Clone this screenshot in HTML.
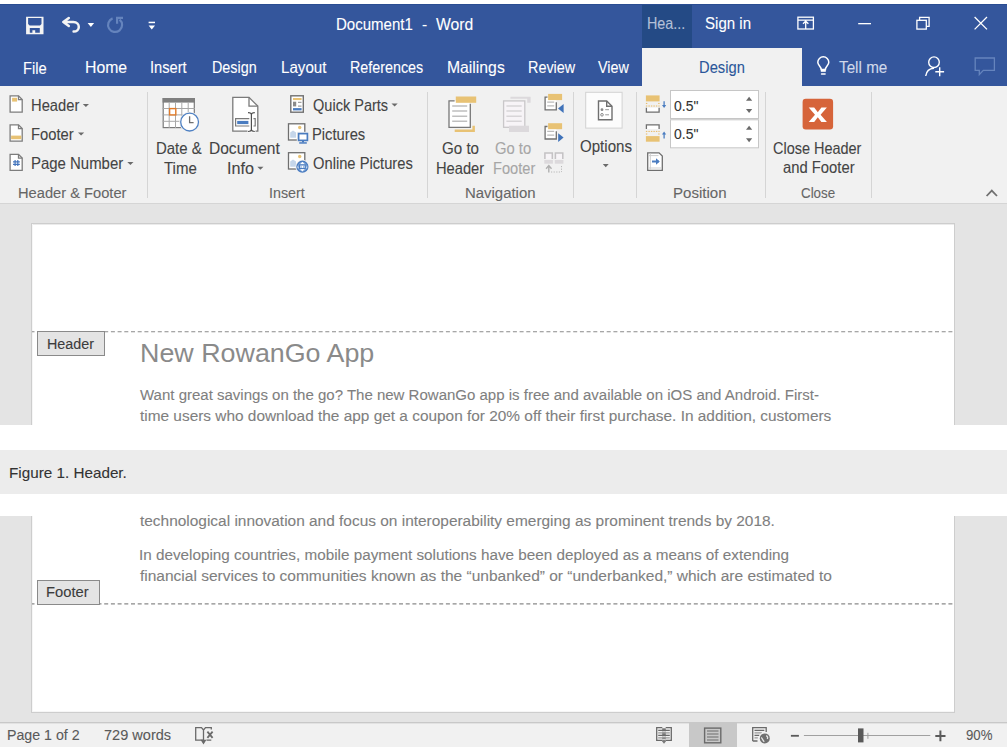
<!DOCTYPE html>
<html><head><meta charset="utf-8"><style>
html,body{margin:0;padding:0;}
body{width:1007px;height:747px;position:relative;overflow:hidden;background:#fff;font-family:"Liberation Sans",sans-serif;}
.t{position:absolute;white-space:nowrap;line-height:1;transform-origin:0 0;-webkit-text-stroke:0.1px currentColor;}
.b{position:absolute;}
svg{position:absolute;overflow:visible;}
</style></head><body>
<!-- backgrounds -->
<div class="b" style="left:0;top:0;width:1007px;height:4px;background:#fff"></div>
<div class="b" style="left:0;top:4px;width:1007px;height:82px;background:#34569c"></div>
<div class="b" style="left:0;top:4px;width:1007px;height:1px;background:#2a4d92"></div>
<div class="b" style="left:642px;top:5px;width:50px;height:43px;background:#244a85"></div>
<div class="b" style="left:642px;top:48px;width:160px;height:38px;background:#f1f1f1"></div>
<div class="b" style="left:0;top:86px;width:1007px;height:117px;background:#f1f1f1"></div>
<div class="b" style="left:0;top:203px;width:1007px;height:1px;background:#d5d5d5"></div>
<!-- doc area top -->
<div class="b" style="left:0;top:204px;width:1007px;height:221px;background:#e4e4e4"></div>
<div class="b" style="left:31px;top:223px;width:924px;height:202px;background:#cdcdcd"></div>
<div class="b" style="left:32px;top:224px;width:922px;height:201px;background:#fff"></div>
<div class="b" style="left:32px;top:224px;width:922px;height:1px;background:#ebebeb"></div>
<div class="b" style="left:32px;top:224px;width:1px;height:201px;background:#f6f6f6"></div>
<!-- caption -->
<div class="b" style="left:0;top:450px;width:1007px;height:44px;background:#ececec"></div>
<!-- doc area bottom -->
<div class="b" style="left:0;top:516px;width:1007px;height:207px;background:#e4e4e4"></div>
<div class="b" style="left:31px;top:516px;width:924px;height:197px;background:#cdcdcd"></div>
<div class="b" style="left:32px;top:516px;width:922px;height:196px;background:#fff"></div>
<div class="b" style="left:32px;top:516px;width:1px;height:196px;background:#f6f6f6"></div>
<div class="b" style="left:32px;top:711px;width:922px;height:1px;background:#f6f6f6"></div>
<!-- status bar -->
<div class="b" style="left:0;top:722px;width:1007px;height:1px;background:#c8c8c8"></div>
<div class="b" style="left:0;top:723px;width:1007px;height:24px;background:#f1f1f1"></div>
<div class="b" style="left:0;top:723px;width:1007px;height:1px;background:#e2e2e2"></div>
<div class="b" style="left:689px;top:723px;width:48px;height:24px;background:#c8c8c8"></div>
<!-- dashed lines -->
<svg style="left:0;top:0" width="1007" height="747" viewBox="0 0 1007 747"><path d="M32,331.7H954 M32,603.9H954" stroke="#8a8a8a" stroke-width="1.1" stroke-dasharray="4 2.7" stroke-dashoffset="1.5"/></svg>

<!-- tags -->
<div class="b" style="left:37px;top:331px;width:66px;height:23px;background:#e4e4e4;border:1px solid #8a8a8a"></div>
<div class="b" style="left:37px;top:580px;width:61px;height:23px;background:#e4e4e4;border:1px solid #8a8a8a"></div>
<!-- ribbon separators -->
<div class="b" style="left:147px;top:92px;width:1px;height:106px;background:#d5d5d5"></div>
<div class="b" style="left:427px;top:92px;width:1px;height:106px;background:#d5d5d5"></div>
<div class="b" style="left:573px;top:92px;width:1px;height:106px;background:#d5d5d5"></div>
<div class="b" style="left:636px;top:92px;width:1px;height:106px;background:#d5d5d5"></div>
<div class="b" style="left:765px;top:92px;width:1px;height:106px;background:#d5d5d5"></div>
<div class="b" style="left:871px;top:92px;width:1px;height:106px;background:#d5d5d5"></div>
<!-- title bar icons -->
<svg style="left:0;top:0" width="1007" height="90" viewBox="0 0 1007 90">
 <path fill="#f4f4f4" fill-rule="evenodd" d="M26.1,16.8H43.5V34.2H26.1Z M28.1,18.1H41.5V24.1L40,25.6H29.6L28.1,24.1Z M29.8,27.9H39.8V32.8H35.2V30.3H32.4V32.8H29.8Z"/>
 <g fill="none" stroke="#f4f4f4" stroke-width="2.5" stroke-linecap="round" stroke-linejoin="round">
  <path d="M68.8,18L63.3,22L68.8,26 M63.5,22H73.3C77,22 78.8,24.6 78.8,27C78.8,29.6 76.8,31.6 73.6,31.6"/>
 </g>
 <path fill="#fff" d="M87.6,23.1H94.1L90.85,26.9Z"/>
 <g fill="none" stroke="#6584bd" stroke-width="2.2">
  <path d="M112.6,18.4A7,7 0 1 0 119.6,19.6"/>
  <path d="M117.1,23.8V17.9H123"/>
 </g>
 <rect x="148.6" y="21.7" width="6.4" height="1.5" fill="#fff"/>
 <path fill="#fff" d="M148.6,25.4H155L151.8,29.6Z"/>
 <!-- ribbon display options -->
 <g fill="none" stroke="#fff" stroke-width="1.3">
  <rect x="797.9" y="17.2" width="15.5" height="11.8"/>
  <path d="M798,20.2H813.5 M805.7,21.2V29 M803,23.8L805.7,21.2L808.4,23.8"/>
 </g>
 <rect x="858.2" y="23" width="12.8" height="1.3" fill="#fff"/>
 <g fill="none" stroke="#fff" stroke-width="1.3">
  <rect x="916.9" y="20.3" width="9.4" height="8.8"/>
  <path d="M919.6,20.3V17.3H929.1V26.3H926.3"/>
  <path d="M974.6,17L987,29.4 M987,17L974.6,29.4"/>
 </g>
 <!-- hea dark overlay is div -->
 <!-- tell me bulb -->
 <g fill="none" stroke="#fff" stroke-width="1.5">
  <path d="M821.2,69.5C821.2,66.5 817.8,65.5 817.8,62.3A5.5,5.5 0 0 1 828.8,62.3C828.8,65.5 825.4,66.5 825.4,69.5Z"/>
 </g>
 <rect x="820.8" y="69.2" width="5" height="2.6" fill="#fff"/>
 <rect x="820.8" y="73.3" width="5" height="1.4" rx="0.7" fill="#fff"/>
 <!-- person + -->
 <g fill="none" stroke="#fff" stroke-width="1.4">
  <circle cx="934" cy="62.2" r="5.3"/>
  <path d="M925.7,76C926.3,71.5 929.5,68.5 934,68.2"/>
  <path d="M935.3,71.8H944.1 M939.7,67.2V76.3"/>
 </g>
 <!-- comment -->
 <path fill="none" stroke="#6584bd" stroke-width="1.3" d="M975.2,58H994.4V70.3H983.3L979.3,74.6V70.3H975.2Z"/>
</svg>
<!-- ribbon icons -->
<svg style="left:0;top:0" width="1007" height="210" viewBox="0 0 1007 210">
 <g stroke="#7d7d7d" stroke-width="1.3" fill="#fff">
  <path d="M10.1,95.8H18.5L22.2,99.6V112.1H10.1Z"/>
  <path d="M10.1,124.8H18.5L22.2,128.6V141.1H10.1Z"/>
  <path d="M10.1,154.3H18.5L22.2,158.1V170.3H10.1Z"/>
 </g>
 <g stroke="#7d7d7d" stroke-width="1.3" fill="none">
  <path d="M18.5,95.8V99.6H22.2 M18.5,124.8V128.6H22.2 M18.5,154.3V158.1H22.2"/>
 </g>
 <rect x="12.1" y="97.8" width="5" height="3.8" fill="#e8c274"/>
 <rect x="11.1" y="135.6" width="10.2" height="3.6" fill="#e8c274"/>
 <g stroke="#4576be" stroke-width="1.2" fill="none">
  <path d="M15.1,160V166.1 M17.8,160V166.1 M13,161.9H19.8 M13,164.3H19.8"/>
 </g>
 <!-- dropdown arrows -->
 <g fill="#6a6a6a">
  <path d="M82.8,103.9H89L85.9,106.9Z"/>
  <path d="M78,132.5H84.2L81.1,135.5Z"/>
  <path d="M127.3,162H133.5L130.4,165Z"/>
  <path d="M257.3,166.8H263.5L260.4,169.8Z"/>
  <path d="M391.5,103.4H397.7L394.6,106.4Z"/>
  <path d="M602.8,163.9H608.7L605.75,167.2Z"/>
 </g>
 <!-- date & time -->
 <rect x="163.2" y="98.6" width="31.1" height="29" fill="#fff" stroke="#7a7a7a" stroke-width="1.2"/>
 <rect x="162.6" y="98" width="32.3" height="4.6" fill="#7f7f7f"/>
 <g stroke="#a8a8a8" stroke-width="1">
  <path d="M169.2,102.6V128 M175.5,102.6V128 M181.8,102.6V128 M188.2,102.6V128 M162.6,108.5H194.9 M162.6,114.9H194.9 M162.6,121.3H194.9"/>
 </g>
 <rect x="169.6" y="108.6" width="6.2" height="6.3" fill="#fff" stroke="#e07b29" stroke-width="1.4"/>
 <circle cx="189.6" cy="122.1" r="10.4" fill="#f1f1f1"/>
 <circle cx="189.6" cy="122.1" r="8.9" fill="#fff" stroke="#4f81c3" stroke-width="1.3"/>
 <path d="M189.6,116.3V122.6H193.6" fill="none" stroke="#6f6f6f" stroke-width="1.3"/>
 <!-- document info -->
 <path d="M232.8,97.3H249L257.8,106.1V131.2H232.8Z" fill="#fff" stroke="#7a7a7a" stroke-width="1.3"/>
 <path d="M249,97.3V106.1H257.8" fill="none" stroke="#7a7a7a" stroke-width="1.3"/>
 <rect x="247.5" y="130" width="8" height="2.5" fill="#fff"/>
 <path d="M249.3,118.7H235.6V126H249.3 M253.5,118.7H255.2V126H253.5" fill="none" stroke="#7a7a7a" stroke-width="1.2"/>
 <rect x="237.2" y="120.9" width="11.2" height="3.2" fill="#4a7cc0"/>
 <path d="M251.4,113.5V130.8 M248,112.6C249.5,112.6 251.4,113.2 251.4,114.5C251.4,113.2 253.3,112.6 254.8,112.6 M248,131.5C249.5,131.5 251.4,130.9 251.4,129.6C251.4,130.9 253.3,131.5 254.8,131.5" fill="none" stroke="#505050" stroke-width="1.2"/>
 <!-- quick parts -->
 <rect x="290.8" y="95.8" width="12.5" height="16.4" fill="#fff" stroke="#707070" stroke-width="1.4"/>
 <rect x="293" y="98" width="8.6" height="2.1" fill="#e8c274"/>
 <rect x="293" y="101.7" width="3.2" height="4.7" fill="#8a8a8a"/>
 <path d="M298,102.3H301.5 M298,106.1H301.5" stroke="#8a8a8a" stroke-width="1"/>
 <rect x="293" y="108.1" width="8.6" height="2.3" fill="#4a7cc0"/>
 <!-- pictures -->
 <rect x="288.5" y="123.8" width="16.3" height="16.2" fill="#fff" stroke="#6f6f6f" stroke-width="1.3"/>
 <circle cx="299.7" cy="127.5" r="1.7" fill="#e8c274"/>
 <path d="M290.2,137.8V132.5L293,130.5L296,132.5V137.8Z" fill="#c5d6ea"/>
 <rect x="296.8" y="131.8" width="12" height="12.5" fill="#f1f1f1"/>
 <rect x="298.6" y="133.6" width="8.8" height="6.8" fill="#fff" stroke="#4a7cc0" stroke-width="1.7"/>
 <rect x="302" y="140.6" width="2" height="1.8" fill="#4a7cc0"/>
 <rect x="299.2" y="142.2" width="7.6" height="1.5" fill="#4a7cc0"/>
 <!-- online pictures -->
 <rect x="288.5" y="152.7" width="16.3" height="16.3" fill="#fff" stroke="#6f6f6f" stroke-width="1.3"/>
 <circle cx="299.7" cy="156.5" r="1.7" fill="#e8c274"/>
 <path d="M290.2,166.8V161.5L293,159.5L296,161.5V166.8Z" fill="#c5d6ea"/>
 <circle cx="302.4" cy="166.7" r="7" fill="#f1f1f1"/>
 <circle cx="302.4" cy="166.7" r="5.4" fill="#7fa6d8" stroke="#4a7cc0" stroke-width="1.4"/>
 <path d="M302.4,161.8L305,164.6H299.8Z M302.4,171.6L305,168.8H299.8Z M297.6,165.2V168.2H298.6 M307.2,165.2V168.2H306.2" fill="#fff"/>
 <rect x="299.6" y="164.9" width="5.6" height="3.6" fill="#fff" stroke="#4a7cc0" stroke-width="1.2"/>
 <path d="M301.2,165.5V168 M303.6,165.5V168" stroke="#7fa6d8" stroke-width="0.8"/>
 <!-- go to header -->
 <rect x="449" y="100.8" width="21.3" height="26.5" fill="#fff"/>
 <path d="M454.6,100.8H449V127.3H470.3V103.8" fill="none" stroke="#777" stroke-width="1.3"/>
 <path d="M452.2,106H467.2 M452.2,111H467.2 M452.2,116.2H467.2 M452.2,121.2H467.2" stroke="#bfbfbf" stroke-width="1.5"/>
 <rect x="455.8" y="96.5" width="20.4" height="6.3" fill="#e8c274"/>
 <path d="M454.7,129.4H472.4V125.7H474.9V132H454.7Z" fill="#e8c274"/>
 <!-- go to footer (disabled) -->
 <rect x="503.6" y="100.9" width="21.2" height="26.4" fill="#f7f4f7" stroke="#c9c7c9" stroke-width="1.3"/>
 <path d="M506.4,106H521.7 M506.4,111H521.7 M506.4,116.2H521.7 M506.4,121.2H521.7" stroke="#d8d5d8" stroke-width="1.5"/>
 <path d="M510.4,96.8H530.6V102.7H527.2V98.7H510.4Z" fill="#dcd9dc"/>
 <rect x="509" y="125.7" width="20" height="6.3" fill="#dcd9dc"/>
 <!-- previous -->
 <rect x="545.1" y="97.2" width="11.2" height="12.6" fill="#fff"/>
 <path d="M547.5,97.2H545.1V109.8H556.3V102.2" fill="none" stroke="#707070" stroke-width="1.3"/>
 <rect x="548.1" y="93.9" width="14" height="6.2" fill="#e8c274"/>
 <path d="M547.2,102.2H554.2 M547.2,105.9H554.2" stroke="#bcbcbc" stroke-width="1.3"/>
 <path d="M558,108.4L563.6,103.9V112.9Z" fill="#3f72b9"/>
 <!-- next -->
 <rect x="545.1" y="126.5" width="11.2" height="12.5" fill="#fff"/>
 <path d="M547.5,126.5H545.1V139H556.3V131.3" fill="none" stroke="#707070" stroke-width="1.3"/>
 <rect x="548.1" y="123.2" width="14" height="6" fill="#e8c274"/>
 <path d="M547.2,131.3H554.2 M547.2,135.2H554.2" stroke="#bcbcbc" stroke-width="1.3"/>
 <path d="M558.2,133.2V142L563.6,137.5Z" fill="#3f72b9"/>
 <!-- link to previous (disabled) -->
 <path d="M544.9,158.9V152.9H552.3V158.9 M555.4,158.9V152.9H562.8V158.9" fill="#f7f4f7" stroke="#c4c2c4" stroke-width="1.5"/>
 <rect x="544.3" y="160" width="8.6" height="3.7" fill="#dcd9dc"/>
 <rect x="554.8" y="160" width="8.6" height="3.7" fill="#dcd9dc"/>
 <path d="M548.8,166.3V172.5 M546.1,168.8L548.8,165.5L551.5,168.8" fill="none" stroke="#b0b0b0" stroke-width="1.4"/>
 <path d="M551,172H561.5 M561.5,166V172" fill="none" stroke="#b8b8b8" stroke-width="1" stroke-dasharray="1.2 1.4"/>
 <!-- options -->
 <rect x="585.7" y="92.3" width="36.4" height="35.8" fill="#fcfcfc" stroke="#d2d2d2" stroke-width="1"/>
 <path d="M598.5,101H606.7L612,106.3V119.8H598.5Z" fill="#fff" stroke="#6f6f6f" stroke-width="1.4"/>
 <path d="M606.7,101V106.3H612" fill="none" stroke="#6f6f6f" stroke-width="1.4"/>
 <circle cx="602" cy="109.7" r="1.4" fill="#8a8a8a"/>
 <circle cx="602" cy="114.8" r="1.3" fill="#fff" stroke="#8a8a8a" stroke-width="1"/>
 <path d="M605.2,109.7H609 M605.2,114.8H609" stroke="#9a9a9a" stroke-width="1"/>
 <!-- header position -->
 <rect x="645.9" y="95.4" width="13.7" height="6" fill="#e8c274"/>
 <path d="M645.9,103.4H647.3 M658.2,103.4H659.6" stroke="#e8b860" stroke-width="1"/>
 <path d="M645.9,106H659.6" stroke="#e8b860" stroke-width="1" stroke-dasharray="1.4 1.1"/>
 <path d="M646.4,107.7V112.2H659.1V107.7" fill="#fff" stroke="#6f6f6f" stroke-width="1.3"/>
 <path d="M664.1,101.2V106" stroke="#4a7cc0" stroke-width="1.3"/>
 <path d="M662,105H666.2L664.1,107.9Z" fill="#4a7cc0"/>
 <!-- footer position -->
 <path d="M646.4,129V124.9H659.1V129" fill="#fff" stroke="#6f6f6f" stroke-width="1.3"/>
 <path d="M645.9,131.4H659.6" stroke="#e8b860" stroke-width="1" stroke-dasharray="1.4 1.1"/>
 <path d="M645.9,134H647.3 M658.2,134H659.6" stroke="#e8b860" stroke-width="1"/>
 <rect x="645.9" y="136.1" width="13.7" height="5.6" fill="#e8c274"/>
 <path d="M664.1,133V138.4" stroke="#4a7cc0" stroke-width="1.3"/>
 <path d="M662,134.4H666.2L664.1,131.5Z" fill="#4a7cc0"/>
 <!-- insert alignment tab -->
 <path d="M647.7,152.8H659L662.3,156.1V170.4H647.7Z" fill="#fff" stroke="#6f6f6f" stroke-width="1.3"/>
 <path d="M650.3,153.5V169.8 M648.3,155.6H658.5 M648.3,168H661.7" stroke="#cfcfcf" stroke-width="1"/>
 <path d="M652,161.5H658.6" stroke="#4a7cc0" stroke-width="2"/>
 <path d="M656,158.2L659.8,161.5L656,164.8Z" fill="#4a7cc0"/>
 <!-- spin boxes -->
 <rect x="670.5" y="90.5" width="88" height="28" fill="#fff" stroke="#c6c6c6" stroke-width="1"/>
 <rect x="670.5" y="119.8" width="88" height="28" fill="#fff" stroke="#c6c6c6" stroke-width="1"/>
 <g fill="#6a6a6a">
  <path d="M746,100.7L749.1,96.7L752.2,100.7Z"/>
  <path d="M746,109H752.2L749.1,113Z"/>
  <path d="M746,129.7L749.1,125.7L752.2,129.7Z"/>
  <path d="M746,138.2H752.2L749.1,142.3Z"/>
 </g>
 <!-- close -->
 <rect x="802.6" y="98.7" width="30.5" height="30.8" rx="3.2" fill="#d6643a"/>
 <path d="M808.7,107.6H814.2L817.8,112.3L821.4,107.6H826.9L820.6,114.8L826.9,122H821.4L817.8,117.3L814.2,122H808.7L815,114.8Z" fill="#fff"/>
 <!-- collapse caret -->
 <path d="M986.6,196L991.8,190.6L997,196" fill="none" stroke="#707070" stroke-width="1.8"/>
</svg>
<!-- status bar icons -->
<svg style="left:0;top:0" width="1007" height="747" viewBox="0 0 1007 747">
 <g fill="none" stroke="#6a6a6a" stroke-width="1.3">
  <path d="M195.7,727.6H201.5L203.5,730V740.2H195.7Z M203.5,730L205.5,727.6H211.3V729.5 M206.5,740.2H211.3 M203.5,730V742"/>
  <path d="M201.7,740.3L203.5,743.3L205.3,740.3Z" fill="#6a6a6a"/>
 </g>
 <path d="M207.4,731.6L212.6,737.9 M212.6,731.6L207.4,737.9" stroke="#6a6a6a" stroke-width="1.8"/>
 <!-- read mode -->
 <path d="M662.3,727.7H656.7V740.3H662.3 M665.7,727.7H671.3V740.3H665.7" fill="none" stroke="#6a6a6a" stroke-width="1.3"/>
 <path d="M662.2,728.3H665.8V741.5L664,743.8L662.2,741.5Z" fill="#7a7a7a"/>
 <path d="M658.2,730.4H669.8 M658.2,735.4H669.8" stroke="#6a6a6a" stroke-width="1.2"/>
 <path d="M658.2,732.9H669.8 M658.2,737.9H669.8" stroke="#9a9a9a" stroke-width="1.3"/>
 <path d="M662.2,731.6H665.8 M662.2,736.6H665.8 M662.2,739.6H665.8" stroke="#f1f1f1" stroke-width="0.8"/>
 <!-- print layout -->
 <rect x="704.6" y="728.1" width="16.2" height="14.7" fill="none" stroke="#6a6a6a" stroke-width="1.4"/>
 <path d="M707,731H718.5 M707,737H718.5" stroke="#6a6a6a" stroke-width="1.2"/>
 <path d="M707,734H718.5 M707,740H718.5" stroke="#8a8a8a" stroke-width="1.3"/>
 <!-- web layout -->
 <path d="M752.7,741H757.5 M752.7,741V727.7H766.2V732" fill="none" stroke="#6a6a6a" stroke-width="1.3"/>
 <path d="M754.5,730.4H764.3 M754.5,735.4H759.5" stroke="#6a6a6a" stroke-width="1.1"/>
 <path d="M754.5,732.8H761.8 M754.5,737.9H757.8" stroke="#9a9a9a" stroke-width="1.2"/>
 <circle cx="764.8" cy="738.4" r="6.2" fill="#f1f1f1"/>
 <circle cx="764.8" cy="738.4" r="5" fill="#707070"/>
 <path d="M761.2,737.5C762.5,738.2 762.5,740.5 764.3,741.7 M766.2,735.6C767.5,736.2 768,737.5 767.3,739" stroke="#e8e8e8" stroke-width="1.3" fill="none"/>
 <!-- zoom -->
 <rect x="790.9" y="734.9" width="8" height="1.8" fill="#5a5a5a"/>
 <rect x="803.9" y="735" width="126.4" height="1" fill="#a0a0a0"/>
 <rect x="867.4" y="732.8" width="1" height="6" fill="#a0a0a0"/>
 <rect x="858" y="728.4" width="5.5" height="14" fill="#5a5a5a"/>
 <path d="M935.3,735.9H945.5 M940.4,730.6V741.2" stroke="#5a5a5a" stroke-width="2"/>
</svg>

<div class="t" style="left:336.09px;top:15.58px;font-size:16.5px;color:#ffffff;transform:scaleX(0.9108);">Document1</div>
<div class="t" style="left:422.3px;top:15.58px;font-size:16.5px;color:#ffffff;transform:scaleX(0.94);">-</div>
<div class="t" style="left:435.8px;top:15.58px;font-size:16.5px;color:#ffffff;transform:scaleX(0.9526);">Word</div>
<div class="t" style="left:647.13px;top:15.37px;font-size:16.5px;color:#b4c0d8;transform:scaleX(0.869);">Hea...</div>
<div class="t" style="left:705.39px;top:15.37px;font-size:16.5px;color:#ffffff;transform:scaleX(0.9122);">Sign in</div>
<div class="t" style="left:23.01px;top:59.88px;font-size:16.5px;color:#ffffff;transform:scaleX(0.892);">File</div>
<div class="t" style="left:84.94px;top:59.07px;font-size:16.5px;color:#ffffff;transform:scaleX(0.9558);">Home</div>
<div class="t" style="left:150.41px;top:59.07px;font-size:16.5px;color:#ffffff;transform:scaleX(0.8878);">Insert</div>
<div class="t" style="left:211.83px;top:59.07px;font-size:16.5px;color:#ffffff;transform:scaleX(0.87);">Design</div>
<div class="t" style="left:281.08px;top:59.07px;font-size:16.5px;color:#ffffff;transform:scaleX(0.9184);">Layout</div>
<div class="t" style="left:350.13px;top:59.07px;font-size:16.5px;color:#ffffff;transform:scaleX(0.8675);">References</div>
<div class="t" style="left:446.75px;top:59.07px;font-size:16.5px;color:#ffffff;transform:scaleX(0.9542);">Mailings</div>
<div class="t" style="left:527.93px;top:59.07px;font-size:16.5px;color:#ffffff;transform:scaleX(0.8717);">Review</div>
<div class="t" style="left:597.7px;top:59.07px;font-size:16.5px;color:#ffffff;transform:scaleX(0.8694);">View</div>
<div class="t" style="left:698.51px;top:59.07px;font-size:16.5px;color:#2b579a;transform:scaleX(0.892);">Design</div>
<div class="t" style="left:838.6px;top:59.07px;font-size:16.5px;color:#d0d9ea;transform:scaleX(0.925);">Tell me</div>
<div class="t" style="left:30.61px;top:96.67px;font-size:16.5px;color:#444444;transform:scaleX(0.8925);">Header</div>
<div class="t" style="left:30.6px;top:125.78px;font-size:16.5px;color:#444444;transform:scaleX(0.8957);">Footer</div>
<div class="t" style="left:30.59px;top:154.78px;font-size:16.5px;color:#444444;transform:scaleX(0.9059);">Page Number</div>
<div class="t" style="left:18.05px;top:185.6px;font-size:14px;color:#666666;transform:scaleX(1.0476);">Header &amp; Footer</div>
<div class="t" style="left:156.09px;top:139.67px;font-size:16.5px;color:#444444;transform:scaleX(0.906);">Date &amp;</div>
<div class="t" style="left:164.0px;top:159.57px;font-size:16.5px;color:#444444;transform:scaleX(0.9111);">Time</div>
<div class="t" style="left:209.36px;top:139.67px;font-size:16.5px;color:#444444;transform:scaleX(0.9419);">Document</div>
<div class="t" style="left:226.82px;top:159.57px;font-size:16.5px;color:#444444;transform:scaleX(0.9808);">Info</div>
<div class="t" style="left:312.6px;top:96.88px;font-size:16.5px;color:#444444;transform:scaleX(0.8812);">Quick Parts</div>
<div class="t" style="left:311.71px;top:125.97px;font-size:16.5px;color:#444444;transform:scaleX(0.8931);">Pictures</div>
<div class="t" style="left:312.6px;top:155.17px;font-size:16.5px;color:#444444;transform:scaleX(0.892);">Online Pictures</div>
<div class="t" style="left:268.98px;top:185.6px;font-size:14px;color:#666666;transform:scaleX(1.0206);">Insert</div>
<div class="t" style="left:441.58px;top:139.78px;font-size:16.5px;color:#444444;transform:scaleX(0.9179);">Go to</div>
<div class="t" style="left:435.61px;top:160.17px;font-size:16.5px;color:#444444;transform:scaleX(0.8887);">Header</div>
<div class="t" style="left:495.0px;top:139.78px;font-size:16.5px;color:#a6a6a6;transform:scaleX(0.8974);">Go to</div>
<div class="t" style="left:492.61px;top:160.17px;font-size:16.5px;color:#a6a6a6;transform:scaleX(0.8872);">Footer</div>
<div class="t" style="left:464.53px;top:185.6px;font-size:14px;color:#666666;transform:scaleX(1.0662);">Navigation</div>
<div class="t" style="left:579.5px;top:137.78px;font-size:16.5px;color:#444444;transform:scaleX(0.914);">Options</div>
<div class="t" style="left:673.7px;top:97.62px;font-size:15.5px;color:#333333;transform:scaleX(0.9);">0.5&quot;</div>
<div class="t" style="left:673.7px;top:126.42px;font-size:15.5px;color:#333333;transform:scaleX(0.9);">0.5&quot;</div>
<div class="t" style="left:673.22px;top:185.7px;font-size:14px;color:#666666;transform:scaleX(1.075);">Position</div>
<div class="t" style="left:773.32px;top:139.97px;font-size:16.5px;color:#444444;transform:scaleX(0.876);">Close Header</div>
<div class="t" style="left:782.6px;top:159.47px;font-size:16.5px;color:#444444;transform:scaleX(0.8975);">and Footer</div>
<div class="t" style="left:800.5px;top:185.7px;font-size:14px;color:#666666;transform:scaleX(0.9528);">Close</div>
<div class="t" style="left:46.88px;top:337.4px;font-size:14px;color:#3c3c3c;transform:scaleX(1.0244);">Header</div>
<div class="t" style="left:140.13px;top:339.5px;font-size:26px;color:#8a8a8a;transform:scaleX(1.0326);-webkit-text-stroke:0;">New RowanGo App</div>
<div class="t" style="left:140.0px;top:387.5px;font-size:14px;color:#7f7f7f;transform:scaleX(1.0719);">Want great savings on the go? The new RowanGo app is free and available on iOS and Android. First-</div>
<div class="t" style="left:140.0px;top:408.8px;font-size:14px;color:#7f7f7f;transform:scaleX(1.0998);">time users who download the app get a coupon for 20% off their first purchase. In addition, customers</div>
<div class="t" style="left:9.38px;top:464.55px;font-size:15px;color:#333333;transform:scaleX(1.0167);">Figure 1. Header.</div>
<div class="t" style="left:140.0px;top:514.2px;font-size:14px;color:#7f7f7f;transform:scaleX(1.1024);">technological innovation and focus on interoperability emerging as prominent trends by 2018.</div>
<div class="t" style="left:138.91px;top:547.8px;font-size:14px;color:#7f7f7f;transform:scaleX(1.0903);">In developing countries, mobile payment solutions have been deployed as a means of extending</div>
<div class="t" style="left:140.0px;top:569.2px;font-size:14px;color:#7f7f7f;transform:scaleX(1.1072);">financial services to communities known as the “unbanked” or “underbanked,” which are estimated to</div>
<div class="t" style="left:45.85px;top:584.5px;font-size:14px;color:#3c3c3c;transform:scaleX(1.0525);">Footer</div>
<div class="t" style="left:7.49px;top:728.0px;font-size:14px;color:#5a5a5a;transform:scaleX(1.0143);">Page 1 of 2</div>
<div class="t" style="left:104.3px;top:728.0px;font-size:14px;color:#5a5a5a;transform:scaleX(1.0391);">729 words</div>
<div class="t" style="left:966.0px;top:728.0px;font-size:14px;color:#5a5a5a;transform:scaleX(0.9429);">90%</div>
</body></html>
